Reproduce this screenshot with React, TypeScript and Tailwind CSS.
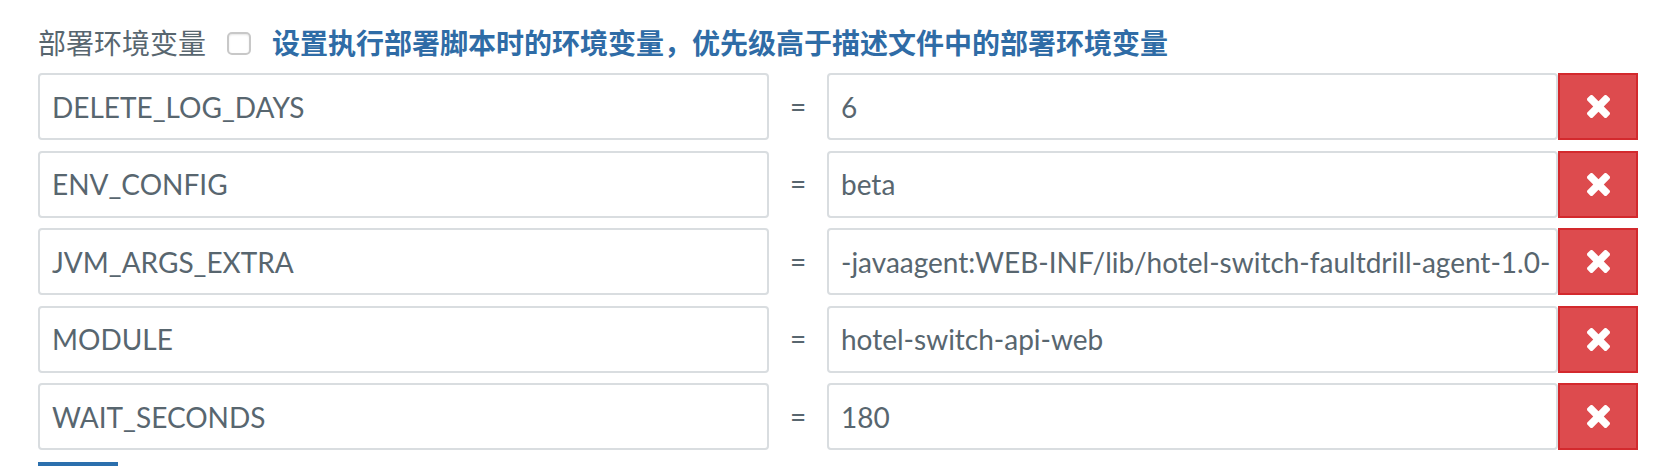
import { memo } from 'react'

const FONT = "font-['Lato','Noto_Sans_CJK_SC',sans-serif]"

const ENV_VARS = [
  { key: 'DELETE_LOG_DAYS', value: '6' },
  { key: 'ENV_CONFIG',      value: 'beta' },
  { key: 'JVM_ARGS_EXTRA',  value: '-javaagent:WEB-INF/lib/hotel-switch-faultdrill-agent-1.0-' },
  { key: 'MODULE',          value: 'hotel-switch-api-web' },
  { key: 'WAIT_SECONDS',    value: '180' },
]

// fa-times (FontAwesome 4) glyph
function TimesIcon() {
  return (
    <svg viewBox="110 372 1188 1182" className="w-[23px] h-[23px]" fill="#fff">
      <path d="M1298 1322q0 40-28 68l-136 136q-28 28-68 28t-68-28l-294-294-294 294q-28 28-68 28t-68-28l-136-136q-28-28-28-68t28-68l294-294-294-294q-28-28-28-68t28-68l136-136q28-28 68-28t68 28l294 294 294-294q28-28 68-28t68 28l136 136q28 28 28 68t-28 68l-294 294 294 294q28 28 28 68z" />
    </svg>
  )
}

const EnvRow = memo(function EnvRow({ k, v }: { k: string; v: string }) {
  return (
    <div className="flex h-[67px]">
      <div className="w-[731px] shrink-0 flex items-center bg-white border-2 border-[#d9dde0] rounded-[4px] pl-[12px] overflow-hidden whitespace-nowrap text-[28px] text-[#58666f]">
        {k}
      </div>
      <div className="w-[58px] shrink-0 flex items-center justify-center text-[28px] text-[#58666f] pb-[2px]">=</div>
      <div className="w-[731px] shrink-0 flex items-center bg-white border-2 border-[#d9dde0] rounded-[4px] pl-[12px] pr-[8px] overflow-hidden whitespace-nowrap text-[28px] text-[#58666f]">
        {v}
      </div>
      <button className="w-[80px] shrink-0 flex items-center justify-center bg-[#dd4b4e] border-2 border-[#d3292d]">
        <TimesIcon />
      </button>
    </div>
  )
})

export default function App() {
  return (
    <div className={`${FONT} bg-white w-[1670px] h-[466px] overflow-hidden pl-[38px] pt-[24px]`}>
      <div className="flex items-center h-[38px] mb-[11px]">
        <span className="text-[28px] text-[#58666f] leading-none">部署环境变量</span>
        <span className="ml-[21px] w-[24px] h-[23px] rounded-[5px] border-2 border-[#c8c8c8] bg-white shadow-[inset_0_1px_2px_rgba(0,0,0,0.1)]" />
        <span className="ml-[21px] text-[28px] font-bold text-[#2f6ca6] leading-none">设置执行部署脚本时的环境变量，优先级高于描述文件中的部署环境变量</span>
      </div>
      <div className="flex flex-col gap-[10.5px]">
        {ENV_VARS.map((e) => <EnvRow key={e.key} k={e.key} v={e.value} />)}
      </div>
      <button className="mt-[12px] w-[80px] h-[60px] bg-[#2b6fad]" />
    </div>
  )
}
